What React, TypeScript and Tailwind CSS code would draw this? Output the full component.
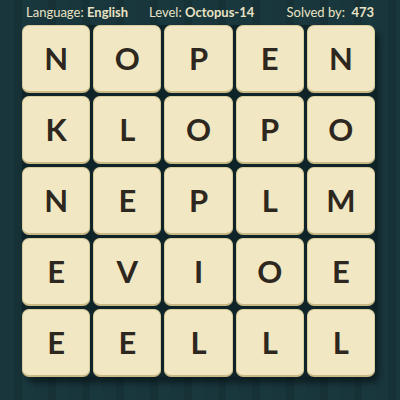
import React from "react";

const rows = ["NOPEN", "KLOPO", "NEPLM", "EVIOE", "EELLL"];

export default function App() {
  return (
    <div className="w-[400px] h-[400px] overflow-hidden bg-[#17343a] bg-[repeating-linear-gradient(90deg,#18363c_0px,#18363c_14px,#163237_14px,#163237_22px,#19383e_22px,#19383e_34px)] font-['Lato',sans-serif] text-[#e9e2c4]">
      <div className="flex items-center h-[24px] pl-[26px] pr-[26px] text-[13px] leading-none">
        <div className="w-[123px]">
          Language: <span className="font-bold">English</span>
        </div>
        <div className="flex-1">
          Level: <span className="font-bold">Octopus-14</span>
        </div>
        <div>
          Solved by: <span className="font-bold ml-[3px]">473</span>
        </div>
      </div>
      <div className="ml-[22px] mt-[1px] w-[353px] rounded-[8px] shadow-[4px_6px_6px_rgba(0,0,0,0.45)] bg-[#0f2429] grid grid-cols-5 gap-[3px]">
        {rows.flatMap((row, r) =>
          row.split("").map((ch, c) => (
            <div
              key={`${r}-${c}`}
              className="h-[68px] rounded-[7px] bg-[#f1e8c3] border border-[#d9cc9d] border-b-[2px] border-b-[#c9b985] flex items-center justify-center text-[31px] font-bold text-[#2e2720] leading-none"
            >
              {ch}
            </div>
          ))
        )}
      </div>
    </div>
  );
}
